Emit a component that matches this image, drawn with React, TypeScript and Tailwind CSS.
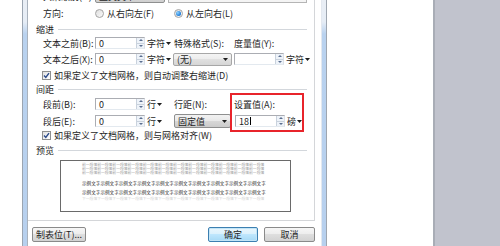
import React from "react";

const T = "text-[9px] leading-none text-[#1e1e1e] whitespace-nowrap";

function Tri({ up = false, color = "#1e1e1e" }: { up?: boolean; color?: string }) {
  return (
    <svg width="5" height="3" viewBox="0 0 5 3" className="shrink-0">
      {up ? <path d="M0 3 L2.5 0 L5 3Z" fill={color} /> : <path d="M0 0 L2.5 3 L5 0Z" fill={color} />}
    </svg>
  );
}

function Spin() {
  return (
    <div className="flex h-full w-[8px] flex-col border-l border-[#c9d2dd] bg-[#eef3f9]">
      <div className="flex flex-1 items-center justify-center border-b border-[#c9d2dd]">
        <svg width="4" height="2" viewBox="0 0 4 2"><path d="M0 2 L2 0 L4 2Z" fill="#5a6e90" /></svg>
      </div>
      <div className="flex flex-1 items-center justify-center">
        <svg width="4" height="2" viewBox="0 0 4 2"><path d="M0 0 L2 2 L4 0Z" fill="#5a6e90" /></svg>
      </div>
    </div>
  );
}

function Input({ value, caret = false }: { value: string; caret?: boolean }) {
  return (
    <div className="flex h-[12px] w-[50px] shrink-0 items-stretch border border-[#abadb3] border-b-[#e3e9ef] border-r-[#dbdfe6] bg-white">
      <div className="flex flex-1 items-center pl-[3px]">
        <span className={T}>{value}</span>
        {caret && <span className="ml-px inline-block h-[8px] w-px bg-black" />}
      </div>
      <Spin />
    </div>
  );
}

function Unit({ text }: { text: string }) {
  return (
    <div className="flex items-center gap-[1px]">
      <span className={T}>{text}</span>
      <Tri />
    </div>
  );
}

function Radio({ checked = false }: { checked?: boolean }) {
  return (
    <div className="flex h-[9px] w-[9px] shrink-0 items-center justify-center rounded-full border border-[#a4a4a4] bg-[linear-gradient(135deg,#dedede,#fafafa)]">
      {checked && <div className="h-[5px] w-[5px] rounded-full bg-[radial-gradient(circle_at_35%_35%,#8fd3ff,#1b7ad8_70%,#0f4f9a)]" />}
    </div>
  );
}

function Check() {
  return (
    <div className="flex h-[9px] w-[9px] shrink-0 items-center justify-center border border-[#8e8f8f] bg-[linear-gradient(135deg,#e0e0e0,#ffffff)]">
      <svg width="7" height="7" viewBox="0 0 7 7">
        <path d="M1 3.6 L2.8 5.4 L6 1.2" fill="none" stroke="#2b4a8a" strokeWidth="1.4" />
      </svg>
    </div>
  );
}

function Header({ text }: { text: string }) {
  return (
    <div className="flex h-[12px] items-center pl-[8px] pr-[7px]">
      <span className={T}>{text}</span>
      <div className="ml-[4px] h-px flex-1 bg-[#d3d7dc]" />
    </div>
  );
}

export default function App() {
  const prev = "前一段落前一段落前一段落前一段落前一段落前一段落前一段落前一段落前一段落前一段落前一段落前一段落";
  const sample = "示例文字示例文字示例文字示例文字示例文字示例文字示例文字示例文字示例文字示例文字";
  const next = "下一段落下一段落下一段落下一段落下一段落下一段落下一段落下一段落下一段落下一段落下一段落下一段落";
  return (
    <div className="relative flex h-[246px] w-[500px] overflow-hidden bg-white font-['Noto_Sans_CJK_SC','Noto_Sans',sans-serif] text-[9px] leading-none text-[#1e1e1e]">
      <div className="w-[22px] shrink-0 bg-white" />
      {/* left frame */}
      <div className="w-[6px] shrink-0 border-x border-l-[#9ba5b1] border-r-[#a9b2bd] bg-[linear-gradient(to_bottom,#e9eef5_0px,#e6edf6_22px,#b9d2ef_34px,#b7d0ee_100%)]" />
      {/* dialog body */}
      <div className="flex w-[293px] shrink-0 flex-col bg-white">
        <div className="flex h-[221px] w-[287px] flex-col overflow-hidden border-b border-r border-[#d4d6d9] bg-white">
          {/* cut-off row */}
          <div className="-mt-[11px] flex h-[14px] shrink-0 items-center pl-[15px]">
            <div className="w-[52px]"><span className={T}>大纲级别(O):</span></div>
            <div className="flex h-[13px] w-[70px] items-center justify-between rounded-[2px] border border-[#8e8f8f] bg-[linear-gradient(to_bottom,#f2f2f2,#e8e8e8_50%,#d8d8d8_50%,#cfcfcf)] px-[3px]">
              <span className={T}>正文文本</span>
              <Tri />
            </div>
            <div className="ml-[3px] flex h-[13px] w-[139px] items-center border border-[#b5b5b5] bg-[#f4f4f4]" />
          </div>
          {/* 方向 */}
          <div className="flex h-[20px] shrink-0 items-center pl-[15px]">
            <div className="w-[52px]"><span className={T}>方向:</span></div>
            <div className="flex w-[79px] items-center gap-[3px]">
              <Radio />
              <span className={T}>从右向左(F)</span>
            </div>
            <div className="flex items-center gap-[3px]">
              <Radio checked />
              <span className={T}>从左向右(L)</span>
            </div>
          </div>
          <Header text="缩进" />
          {/* 文本之前 */}
          <div className="flex h-[16px] shrink-0 items-center pl-[15px]">
            <div className="w-[52px]"><span className={T}>文本之前(B):</span></div>
            <Input value="0" />
            <div className="ml-[2px] w-[27px]"><Unit text="字符" /></div>
            <div className="w-[60px]"><span className={T}>特殊格式(S):</span></div>
            <span className={T}>度量值(Y):</span>
          </div>
          {/* 文本之后 */}
          <div className="flex h-[16px] shrink-0 items-center pl-[15px]">
            <div className="w-[52px]"><span className={T}>文本之后(X):</span></div>
            <Input value="0" />
            <div className="ml-[2px] w-[26px]"><Unit text="字符" /></div>
            <div className="w-[61px]">
              <div className="flex h-[13px] w-[59px] items-center justify-between rounded-[2px] border border-[#a7a7a7] bg-[linear-gradient(to_bottom,#f4f4f4,#ececec_50%,#e0e0e0_50%,#d6d6d6)] px-[3px]">
                <span className={T}>(无)</span>
                <Tri />
              </div>
            </div>
            <Input value="" />
            <div className="ml-[2px]"><Unit text="字符" /></div>
          </div>
          {/* checkbox 1 */}
          <div className="flex h-[16px] shrink-0 items-center gap-[3px] pl-[14px]">
            <Check />
            <span className={T}>如果定义了文档网格，则自动调整右缩进(D)</span>
          </div>
          <Header text="间距" />
          {/* 段前 */}
          <div className="flex h-[18px] shrink-0 items-center pl-[15px]">
            <div className="w-[52px]"><span className={T}>段前(B):</span></div>
            <Input value="0" />
            <div className="ml-[2px] w-[27px]"><Unit text="行" /></div>
            <div className="w-[60px]"><span className={T}>行距(N):</span></div>
            <span className={T}>设置值(A):</span>
          </div>
          {/* 段后 */}
          <div className="flex h-[16px] shrink-0 items-center pl-[15px]">
            <div className="w-[52px]"><span className={T}>段后(E):</span></div>
            <Input value="0" />
            <div className="ml-[2px] w-[27px]"><Unit text="行" /></div>
            <div className="w-[61px]">
              <div className="flex h-[14px] w-[57px] items-center justify-between rounded-[2px] border border-[#8e8f8f] bg-[linear-gradient(to_bottom,#f2f2f2,#e8e8e8_50%,#d8d8d8_50%,#cbcbcb)] px-[3px]">
                <span className={T}>固定值</span>
                <Tri />
              </div>
            </div>
            <Input value="18" caret />
            <div className="ml-[2px]"><Unit text="磅" /></div>
          </div>
          {/* checkbox 2 */}
          <div className="flex h-[12px] shrink-0 items-center gap-[3px] pl-[14px]">
            <Check />
            <span className={T}>如果定义了文档网格，则与网格对齐(W)</span>
          </div>
          <div className="flex h-[18px] shrink-0 flex-col justify-center">
            <Header text="预览" />
          </div>
          {/* preview */}
          <div className="ml-[32px] mt-px flex h-[52px] w-[231px] shrink-0 flex-col overflow-hidden border border-[#6a6a6a] bg-white pl-[21px] pr-[23px] pt-[2px]">
            <div className="whitespace-nowrap text-[3.8px] leading-[4px] text-[#9a9a9a]">
              <div>{prev}</div>
              <div>{prev}</div>
              <div>{prev}</div>
            </div>
            <div className="mt-[4px] whitespace-nowrap text-[4.6px] leading-[9px] text-[#222]">
              <div>{sample}</div>
              <div>{sample}</div>
            </div>
            <div className="whitespace-nowrap text-[3.8px] leading-[4px] text-[#d0d0d0]">
              <div>{next}</div>
            </div>
          </div>
        </div>
        {/* buttons */}
        <div className="flex flex-1 items-start justify-between pl-[4px] pr-[6px] pt-[6px]">
          <div className="flex h-[15px] w-[54px] items-center justify-center rounded-[2px] border border-[#8a8a8a] bg-[linear-gradient(to_bottom,#f6f6f6,#ececec_50%,#dedede_50%,#d2d2d2)]">
            <span className={T}>制表位(T)...</span>
          </div>
          <div className="flex gap-[6px]">
            <div className="flex h-[15px] w-[50px] items-center justify-center rounded-[2px] border border-[#3c7fb1] bg-[linear-gradient(to_bottom,#eaf6fd,#d9f0fc_50%,#bee6fd_50%,#a7d9f5)] shadow-[inset_0_0_0_1px_#c3e5f7]">
              <span className={T}>确定</span>
            </div>
            <div className="flex h-[15px] w-[51px] items-center justify-center rounded-[2px] border border-[#8a8a8a] bg-[linear-gradient(to_bottom,#f6f6f6,#ececec_50%,#dedede_50%,#d2d2d2)]">
              <span className={T}>取消</span>
            </div>
          </div>
        </div>
      </div>
      {/* right frame */}
      <div className="w-[6px] shrink-0 border-l border-r border-l-[#e3e8ef] border-r-[#9ea6b0] bg-[linear-gradient(to_bottom,#e9eef5_0px,#e6edf6_22px,#b9d2ef_34px,#b7d0ee_100%)]" />
      <div className="w-[106px] shrink-0 bg-white" />
      <div className="w-[2px] shrink-0 bg-[#a9adb6]" />
      <div className="flex-1 bg-[#c1c3cd]" />
      {/* red highlight */}
      <div className="pointer-events-none absolute left-[230px] top-[93px] h-[39px] w-[74px] border-2 border-[#e8242b]" />
    </div>
  );
}
